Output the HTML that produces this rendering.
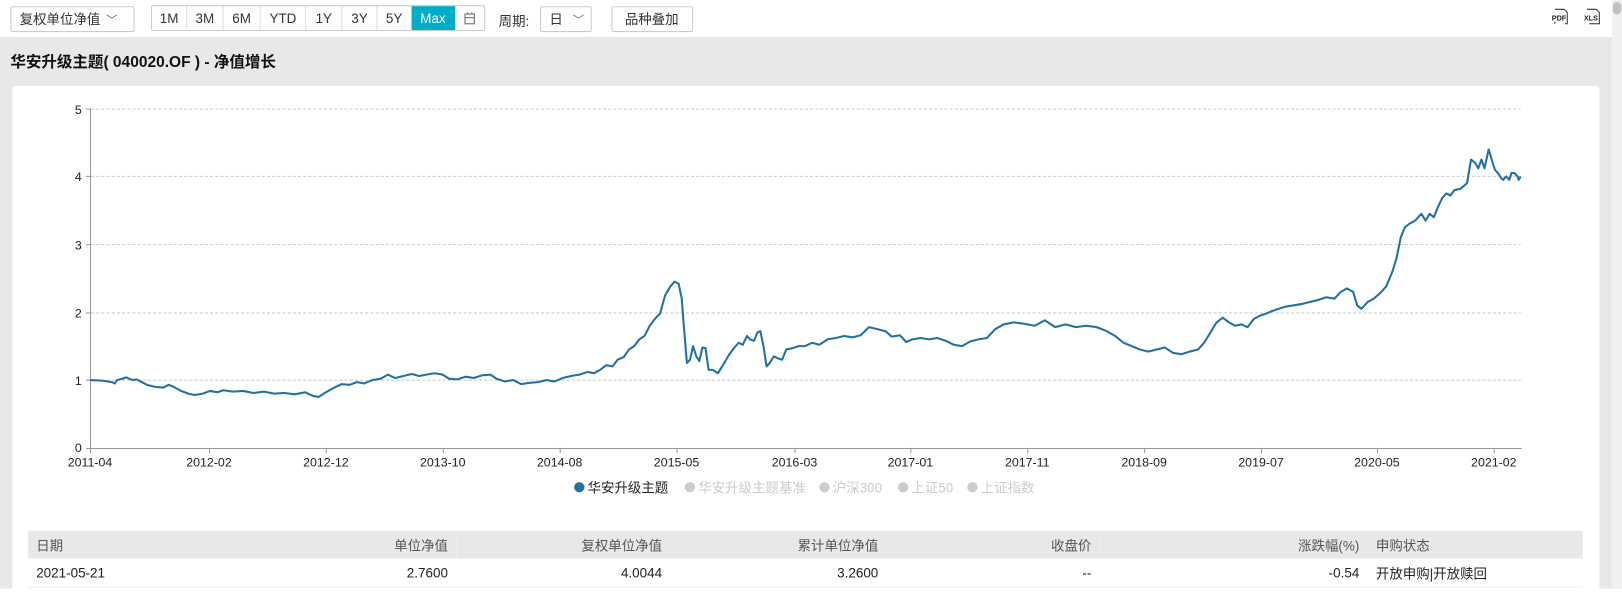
<!DOCTYPE html>
<html><head><meta charset="utf-8">
<style>
html,body{margin:0;padding:0;width:1622px;height:588px;overflow:hidden;background:#fff;}
#w{position:absolute;left:0;top:0;width:1568px;height:569px;transform:scale(1.0345);transform-origin:0 0;font-family:"Liberation Sans","Noto Sans CJK SC",sans-serif;color:#333;}
.top{position:absolute;left:0;top:0;width:1558px;height:36px;background:#fff;border-bottom:1px solid #ddd;}
.gray{position:absolute;left:0;top:37px;width:1558px;height:532px;background:#e8e8e8;}
.sb{position:absolute;left:1558px;top:0;width:10px;height:569px;background:#f0f0f0;}
.sb i{position:absolute;left:1px;top:2px;width:8px;height:12px;border-radius:4px;background:#c1c1c1;}
.dd{position:absolute;top:6px;border:1px solid #ccc;border-radius:2px;font-size:13px;line-height:23px;box-sizing:border-box;height:25px;padding-left:8px;background:#fff;}
.grp{position:absolute;left:146px;top:5px;height:25px;border:1px solid #ccc;border-radius:2px;display:flex;box-sizing:border-box;}
.grp span{display:block;font-size:13px;line-height:23px;text-align:center;border-right:1px solid #ddd;color:#333;}
.grp span.on{background:#00acc8;color:#fff;border-right-color:#00acc8;}
.card{position:absolute;left:12px;top:83px;width:1534px;height:500px;background:#fff;border-radius:3px;}
.title{position:absolute;left:10px;top:49px;font-size:15px;font-weight:bold;color:#111;}
table{position:absolute;left:27px;top:513px;width:1503px;border-collapse:collapse;font-size:13px;table-layout:fixed;}
td{height:27px;padding:0 8px;white-space:nowrap;overflow:hidden;}
tr.h td{background:#e8e8e8;color:#555;}
tr.b td{color:#222;border-bottom:1px solid #eee;}
.r{text-align:right;}
</style></head><body><div id="w">
<div class="top"></div>
<div class="gray"></div>
<div class="sb"><i></i></div>
<div class="dd" style="left:10px;width:120px;">复权单位净值 <span style="font-size:11px;color:#666;margin-left:2px">﹀</span></div>
<div class="grp">
<span style="width:33px">1M</span><span style="width:34px">3M</span><span style="width:35px">6M</span><span style="width:43px">YTD</span><span style="width:34px">1Y</span><span style="width:33px">3Y</span><span style="width:32px">5Y</span><span class="on" style="width:41px">Max</span><span style="width:28px;border-right:none;"><svg width="12" height="12" viewBox="0 0 12 12" style="margin-top:6px"><rect x="1.5" y="1.5" width="9" height="9.5" fill="none" stroke="#666"/><line x1="1.5" y1="5" x2="10.5" y2="5" stroke="#666"/><line x1="4" y1="0" x2="4" y2="2" stroke="#666"/><line x1="8" y1="0" x2="8" y2="2" stroke="#666"/></svg></span>
</div>
<div style="position:absolute;left:482px;top:10px;font-size:13px;">周期:</div>
<div class="dd" style="left:522px;width:50px;">日 <span style="font-size:11px;color:#666;margin-left:6px">﹀</span></div>
<div class="dd" style="left:591px;width:79px;padding-left:12px;">品种叠加</div>
<svg style="position:absolute;left:1500px;top:8px" width="18" height="17"><path d="M3 1H12L15 4V15H13" fill="none" stroke="#333"/><path d="M3 13V15" stroke="#333"/><text x="0" y="12" font-size="7" font-family="Liberation Sans" font-weight="bold" fill="#222">PDF</text></svg>
<svg style="position:absolute;left:1531px;top:8px" width="18" height="17"><path d="M3 1H12L15 4V15H5" fill="none" stroke="#333"/><text x="0" y="12" font-size="7" font-family="Liberation Sans" font-weight="bold" fill="#222">XLS</text></svg>
<div class="title">华安升级主题( 040020.OF ) - 净值增长</div>
<div class="card"></div>
<svg style="position:absolute;left:0;top:0" width="1558" height="569">
<g stroke="#ccc" stroke-dasharray="3,2" stroke-width="1">
<line x1="88" y1="105.5" x2="1470" y2="105.5"/><line x1="88" y1="170.5" x2="1470" y2="170.5"/><line x1="88" y1="236.5" x2="1470" y2="236.5"/><line x1="88" y1="302.5" x2="1470" y2="302.5"/><line x1="88" y1="367.5" x2="1470" y2="367.5"/>
</g>
<g stroke="#999" stroke-width="1">
<line x1="87.5" y1="105" x2="87.5" y2="433"/><line x1="87" y1="433.5" x2="1471" y2="433.5"/>
<line x1="83" y1="105.5" x2="87" y2="105.5"/><line x1="83" y1="170.5" x2="87" y2="170.5"/><line x1="83" y1="236.5" x2="87" y2="236.5"/><line x1="83" y1="302.5" x2="87" y2="302.5"/><line x1="83" y1="367.5" x2="87" y2="367.5"/><line x1="83" y1="433.5" x2="87" y2="433.5"/>
<line x1="87.5" y1="433" x2="87.5" y2="438"/><line x1="202.5" y1="433" x2="202.5" y2="438"/><line x1="315.5" y1="433" x2="315.5" y2="438"/><line x1="428.5" y1="433" x2="428.5" y2="438"/><line x1="541.5" y1="433" x2="541.5" y2="438"/><line x1="654.5" y1="433" x2="654.5" y2="438"/><line x1="768.5" y1="433" x2="768.5" y2="438"/><line x1="880.5" y1="433" x2="880.5" y2="438"/><line x1="993.5" y1="433" x2="993.5" y2="438"/><line x1="1106.5" y1="433" x2="1106.5" y2="438"/><line x1="1219.5" y1="433" x2="1219.5" y2="438"/><line x1="1331.5" y1="433" x2="1331.5" y2="438"/><line x1="1444.5" y1="433" x2="1444.5" y2="438"/>
</g>
<g font-family="Liberation Sans" font-size="12" fill="#222" text-anchor="end">
<text x="79" y="110">5</text><text x="79" y="175">4</text><text x="79" y="241">3</text><text x="79" y="307">2</text><text x="79" y="372">1</text><text x="79" y="437">0</text>
</g>
<g font-family="Liberation Sans" font-size="12" fill="#222" text-anchor="middle">
<text x="87" y="451">2011-04</text><text x="202" y="451">2012-02</text><text x="315" y="451">2012-12</text><text x="428" y="451">2013-10</text><text x="541" y="451">2014-08</text><text x="654" y="451">2015-05</text><text x="768" y="451">2016-03</text><text x="880" y="451">2017-01</text><text x="993" y="451">2017-11</text><text x="1106" y="451">2018-09</text><text x="1219" y="451">2019-07</text><text x="1331" y="451">2020-05</text><text x="1444" y="451">2021-02</text>
</g>
<g transform="translate(0,433) scale(1,-65.6)">
<polyline vector-effect="non-scaling-stroke" fill="none" stroke="#2271a0" stroke-width="2" stroke-linejoin="round" points="87,1 100,0.99 108,0.97 111,0.95 113,1 118,1.02 122,1.04 128,1 132,1.01 136,0.98 142,0.93 150,0.9 158,0.89 163,0.93 168,0.9 175,0.84 182,0.8 188,0.78 196,0.8 203,0.84 210,0.82 216,0.85 225,0.83 235,0.84 245,0.81 255,0.83 265,0.8 275,0.81 285,0.79 295,0.82 302,0.77 308,0.75 315,0.82 322,0.88 330,0.94 338,0.93 345,0.97 352,0.95 360,1.0 368,1.02 375,1.08 382,1.03 390,1.06 398,1.09 405,1.06 412,1.08 420,1.1 428,1.08 434,1.02 442,1.01 450,1.05 458,1.03 466,1.07 474,1.08 480,1.02 488,0.98 496,1.0 504,0.94 512,0.96 520,0.97 528,1.0 536,0.98 544,1.03 552,1.06 560,1.08 568,1.12 574,1.1 580,1.15 586,1.22 592,1.2 597,1.3 603,1.34 608,1.45 613,1.5 618,1.6 623,1.65 628,1.8 633,1.9 638,1.98 643,2.25 648,2.38 652,2.45 656,2.42 659,2.2 661,1.8 664,1.25 667,1.3 670,1.5 673,1.35 676,1.28 679,1.48 682,1.47 685,1.15 689,1.15 694,1.1 700,1.25 705,1.38 710,1.48 714,1.55 718,1.52 722,1.65 725,1.6 729,1.58 732,1.7 735,1.72 738,1.5 741,1.2 744,1.25 748,1.35 752,1.32 756,1.3 760,1.45 766,1.47 772,1.5 778,1.5 785,1.55 792,1.52 800,1.6 808,1.62 816,1.65 824,1.63 832,1.66 840,1.78 848,1.75 856,1.72 862,1.64 870,1.66 876,1.56 882,1.6 890,1.62 898,1.6 906,1.62 914,1.58 922,1.52 930,1.5 938,1.57 946,1.6 954,1.62 962,1.75 970,1.82 980,1.85 990,1.83 1000,1.8 1010,1.88 1020,1.78 1030,1.82 1040,1.78 1050,1.8 1060,1.78 1070,1.72 1078,1.65 1086,1.55 1094,1.5 1102,1.45 1110,1.42 1118,1.45 1126,1.48 1134,1.4 1142,1.38 1150,1.42 1158,1.45 1164,1.55 1170,1.7 1176,1.85 1182,1.92 1188,1.85 1194,1.8 1200,1.82 1206,1.78 1212,1.9 1218,1.95 1224,1.98 1230,2.02 1236,2.05 1242,2.08 1250,2.1 1258,2.12 1266,2.15 1274,2.18 1282,2.22 1290,2.2 1296,2.3 1302,2.35 1308,2.3 1312,2.1 1316,2.05 1322,2.15 1328,2.2 1334,2.28 1340,2.38 1346,2.6 1350,2.8 1354,3.1 1358,3.25 1362,3.3 1368,3.35 1374,3.45 1378,3.35 1382,3.45 1386,3.4 1390,3.55 1394,3.68 1398,3.75 1402,3.72 1406,3.8 1412,3.82 1418,3.9 1422,4.25 1426,4.2 1429,4.12 1432,4.25 1435,4.12 1439,4.4 1442,4.25 1445,4.1 1448,4.05 1451,3.98 1453,3.95 1456,4.0 1459,3.95 1461,4.05 1464,4.05 1467,4.0 1468,3.95 1470,4.0"/>
</g>
<g font-family="Liberation Sans,Noto Sans CJK SC,sans-serif" font-size="13">
<circle cx="560" cy="471" r="5" fill="#2271a0"/><text x="568" y="476" fill="#222">华安升级主题</text>
<circle cx="667" cy="471" r="5" fill="#ccc"/><text x="675" y="476" fill="#ccc">华安升级主题基准</text>
<circle cx="797" cy="471" r="5" fill="#ccc"/><text x="805" y="476" fill="#ccc">沪深300</text>
<circle cx="873" cy="471" r="5" fill="#ccc"/><text x="881" y="476" fill="#ccc">上证50</text>
<circle cx="940" cy="471" r="5" fill="#ccc"/><text x="948" y="476" fill="#ccc">上证指数</text>
</g>
</svg>
<table>
<colgroup><col style="width:150px"><col style="width:264px"><col style="width:207px"><col style="width:209px"><col style="width:206px"><col style="width:259px"><col></colgroup>
<tr class="h"><td>日期</td><td class="r">单位净值</td><td class="r">复权单位净值</td><td class="r">累计单位净值</td><td class="r">收盘价</td><td class="r">涨跌幅(%)</td><td>申购状态</td></tr>
<tr class="b"><td>2021-05-21</td><td class="r">2.7600</td><td class="r">4.0044</td><td class="r">3.2600</td><td class="r">--</td><td class="r">-0.54</td><td>开放申购|开放赎回</td></tr>
</table>
</div></body></html>
